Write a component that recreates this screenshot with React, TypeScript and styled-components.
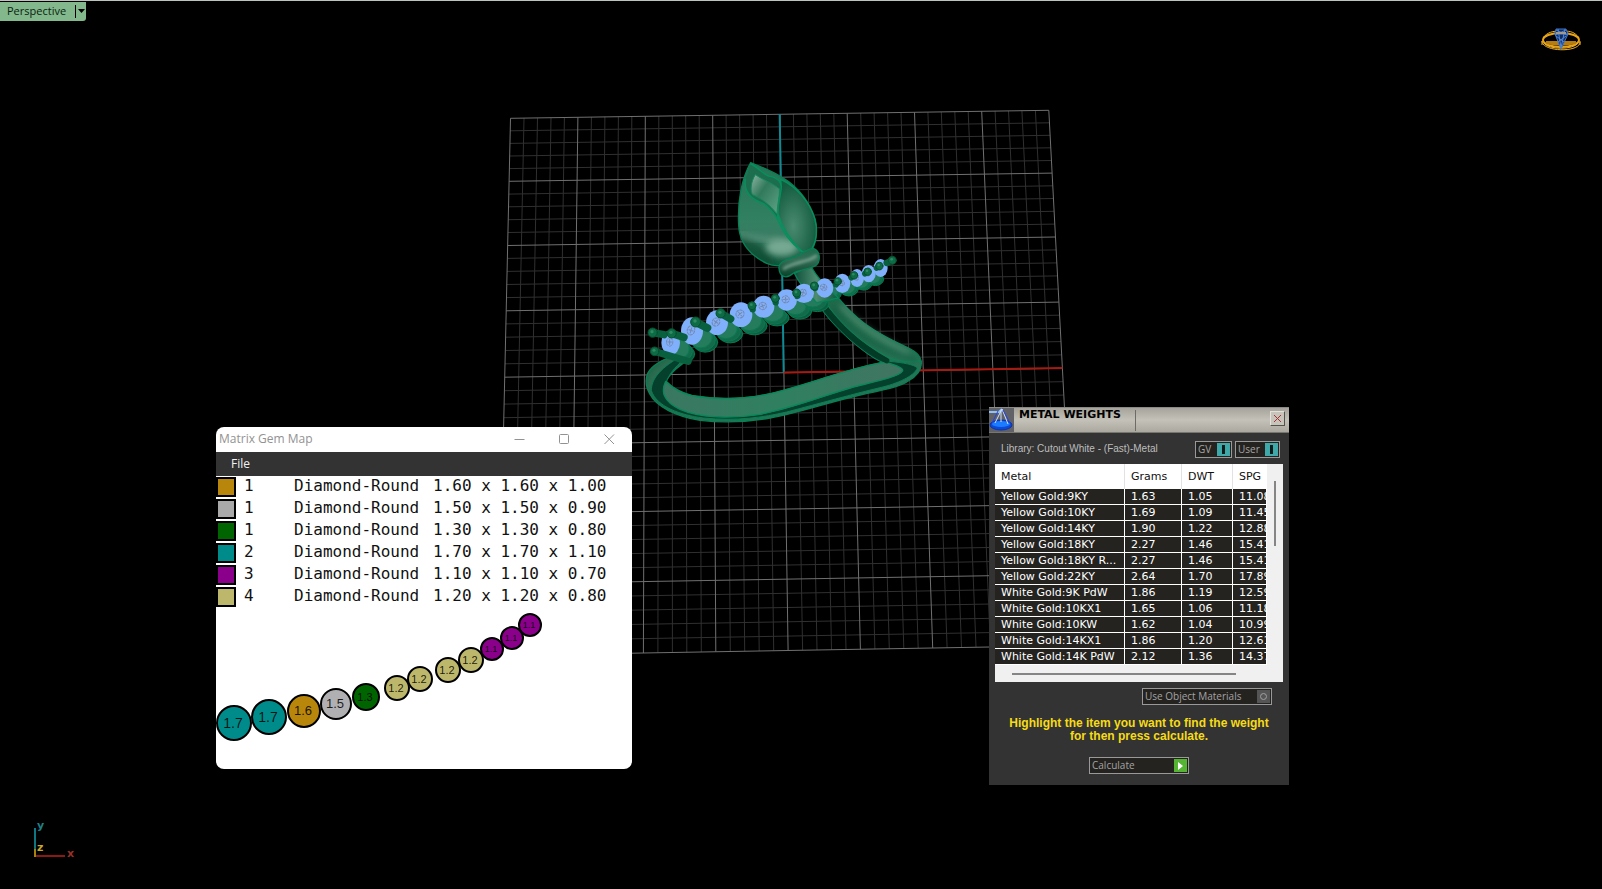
import React from "react";
import styled, { createGlobalStyle } from "styled-components";

const GlobalStyle = createGlobalStyle`
  *, *::before, *::after { box-sizing: border-box; }
  body { margin: 0; background: #000; }
  button { margin: 0; padding: 0; border: 0; background: none; font: inherit; color: inherit; }
  h1, h2, p { margin: 0; }
`;

const ui = `"Open Sans", "Noto Sans", sans-serif`;
const verdana = `"DejaVu Sans", Verdana, sans-serif`;
const sans = `"Liberation Sans", Arial, sans-serif`;

/* ---------- viewport ---------- */

const Viewport = styled.main`
  position: relative;
  min-height: 100vh;
  overflow: hidden;
  background: #000;
  border-top: 1px solid #bcc4be;
`;

const Scene = styled.svg`
  position: absolute;
  top: -1px;
  left: 0;
  width: 100%;
  height: 100vh;
  display: block;
`;

const ViewTab = styled.div`
  position: relative;
  display: inline-flex;
  height: 19px;
  background: #82b88c;
  border-bottom-right-radius: 3px;
  font: 11px/18px ${ui};
  color: #0b1d10;
`;

const ViewName = styled.button`
  width: 75px;
  padding-left: 7px;
  text-align: left;
`;

const ViewArrow = styled.button`
  display: flex;
  align-items: center;
  justify-content: center;
  width: 11px;
  margin: 3px 0;
  border-left: 1px solid #000;
`;

const RingLogo = styled.svg`
  position: absolute;
  top: 27px;
  right: 20px;
`;

const AxisTriad = styled.svg`
  position: absolute;
  left: 32px;
  bottom: 30px;
  font-family: "DejaVu Sans", sans-serif;
  font-size: 11px;
  font-weight: bold;
`;

type P = [number, number];

const corners: Record<"tl" | "tr" | "bl" | "br", P> = {
  tl: [510.5, 118.3],
  tr: [1048.8, 110.3],
  bl: [498.5, 655.5],
  br: [1077, 645.5],
};

/* Projects the unit square onto the construction plane's four corners. */
function project(u: number, v: number): P {
  const [x0, y0] = corners.tl;
  const [x1, y1] = corners.tr;
  const [x2, y2] = corners.br;
  const [x3, y3] = corners.bl;
  const dx1 = x1 - x2, dx2 = x3 - x2, dx3 = x0 - x1 + x2 - x3;
  const dy1 = y1 - y2, dy2 = y3 - y2, dy3 = y0 - y1 + y2 - y3;
  const det = dx1 * dy2 - dx2 * dy1;
  const g = (dx3 * dy2 - dx2 * dy3) / det;
  const h = (dx1 * dy3 - dx3 * dy1) / det;
  const w = g * u + h * v + 1;
  return [
    ((x1 - x0 + g * x1) * u + (x3 - x0 + h * x3) * v + x0) / w,
    ((y1 - y0 + g * y1) * u + (y3 - y0 + h * y3) * v + y0) / w,
  ];
}

const gridPath = (major: boolean) => {
  let d = "";
  for (let i = 0; i <= 40; i++) {
    if ((i % 5 === 0) !== major) continue;
    const t = i / 40;
    const ends: [P, P][] = [
      [project(t, 0), project(t, 1)],
      [project(0, t), project(1, t)],
    ];
    ends.forEach(([a, b]) => {
      d += `M${a[0].toFixed(1)} ${a[1].toFixed(1)}L${b[0].toFixed(1)} ${b[1].toFixed(1)}`;
    });
  }
  return d;
};

const stones = [
  [152, 608, 28, 37], [216, 573, 33, 41], [291, 548, 33, 37], [363, 524, 34, 37],
  [431, 500, 32, 33], [500, 480, 31, 32], [552, 460, 30, 29], [614, 444, 26, 29],
  [667, 430, 24, 29], [711, 414, 21, 27], [746, 401, 21, 26], [782, 384, 21, 27],
];

const prongs = [
  [98, 578, 132, 584, 14], [104, 634, 205, 664, 13], [155, 580, 192, 592, 14],
  [227, 546, 262, 564, 15], [302, 520, 332, 537, 14], [396, 497, 398, 508, 12],
  [466, 475, 467, 487, 12], [530, 459, 532, 468, 12], [583, 438, 585, 444, 12],
  [653, 424, 648, 434, 11], [702, 406, 694, 413, 11], [743, 395, 735, 401, 11],
  [778, 378, 770, 384, 11], [817, 361, 800, 369, 12],
];

const budOutline =
  "M392 68C365 115 352 185 356 255C358 305 388 345 440 370C455 376 468 378 480 376L570 336C590 315 593 270 586 240C572 190 535 140 486 112C455 92 415 77 392 68Z";

const Ring = () => (
  <g transform="translate(620 140) scale(.33333)" strokeLinecap="round" strokeLinejoin="round">
    <path
      d="M182 640C150 650 98 668 83 700C74 722 78 742 90 763C108 800 170 830 240 841C300 848 380 847 450 834C540 818 620 788 720 765C800 748 835 742 865 723C898 704 906 685 904 664C900 648 893 638 866 624C800 595 750 566 714 535C690 515 672 496 655 474L590 480C610 522 650 562 695 600C730 633 760 655 788 667C750 674 700 687 640 706C560 730 490 757 410 769C350 777 280 777 215 766C180 758 158 744 138 724C150 700 180 672 215 655Z"
      fill="url(#tube)" stroke="#087f55" strokeWidth="4"
    />
    <path d="M170 658C120 680 98 705 92 745" fill="none" stroke="#5d7f70" strokeWidth="10" opacity=".5" filter="url(#soft)" />
    <path
      d="M180 650C112 690 94 722 94 752C110 800 180 825 250 834C350 844 430 832 500 816C600 790 700 762 780 743C830 732 884 708 892 684C884 674 850 668 808 664C750 645 690 592 645 546C625 524 612 505 602 484L592 486C612 525 655 568 690 600C735 638 765 658 788 667C820 675 850 684 845 695C835 710 760 722 700 741C600 770 520 806 400 826C300 834 190 818 150 785C120 752 136 705 190 660Z"
      fill="#05402c" stroke="#077f55" strokeWidth="3"
    />
    <path
      d="M137 724C160 748 190 764 230 770C310 781 380 775 440 763C530 744 610 712 690 691C730 679 770 672 788 667C815 669 850 683 848 692C840 710 760 726 700 741C600 770 520 803 420 823C340 836 240 835 180 808C130 785 122 755 137 724Z"
      fill="url(#inner)" stroke="#08885a" strokeWidth="4"
    />
    <path d="M602 484C660 565 720 617 800 662" fill="none" stroke="#043b27" strokeWidth="16" />
    <path d="M612 480C660 552 720 605 800 650C835 664 870 669 900 662" fill="none" stroke="#08885a" strokeWidth="3" />
    <path d="M665 500C710 550 770 592 862 638" fill="none" stroke="#8fb3a2" strokeWidth="10" opacity=".55" filter="url(#soft)" />
    <path d="M640 505C700 580 770 625 890 660" fill="none" stroke="#0a4a33" strokeWidth="10" opacity=".6" filter="url(#soft)" />

    {stones.slice(0, 11).map(([x, y, rx, ry], i) => {
      const k = i < 7 ? 1 : 0.5;
      return (
        <g key={i} stroke="#08794f" strokeWidth="3">
          <ellipse cx={x + 40 * k} cy={y + 34 * k} rx={rx + 4} ry={ry * 0.72} fill="#0c5e42" />
          <ellipse cx={x + 34 * k} cy={y + 27 * k} rx={rx + 3} ry={ry * 0.76} fill="#156a4b" />
          <ellipse cx={x + 26 * k} cy={y + 18 * k} rx={rx + 2} ry={ry * 0.8} fill="#257c5d" />
        </g>
      );
    })}

    <path d="M523 400C540 435 560 458 590 488L655 474C625 448 590 410 572 378Z" fill="url(#stem)" stroke="#08835a" strokeWidth="4" />
    <path d={budOutline} fill="url(#bud)" />
    <g clipPath="url(#budClip)">
      <path d="M356 285C400 300 430 312 470 372L400 390L350 330Z" fill="#0a4c33" opacity=".75" filter="url(#soft)" />
      <ellipse cx="485" cy="322" rx="48" ry="26" fill="#8fbba6" opacity=".75" filter="url(#soft)" />
      <path d="M356 282C400 296 430 298 480 300" fill="none" stroke="#6da08a" strokeWidth="12" opacity=".7" filter="url(#soft)" />
    </g>
    <path d={budOutline} fill="none" stroke="#087f55" strokeWidth="4" />
    <path d="M482 118C488 155 470 190 474 222C488 265 510 300 545 334L570 334C592 305 593 265 584 235C568 185 530 140 482 118Z" fill="url(#petal)" stroke="#06905e" strokeWidth="4" />
    <path d="M376 118C372 150 384 175 430 190C452 205 464 222 474 240C468 205 482 175 484 140C482 122 470 114 455 110C435 112 415 80 392 72" fill="#1d6e4f" stroke="#06905e" strokeWidth="4" />
    <path d="M406 104C392 125 390 155 398 164C425 175 450 195 471 222C472 190 480 165 478 146C455 128 425 118 406 104Z" fill="url(#core)" stroke="#18885e" strokeWidth="3" />
    <path d="M474 240C488 275 512 308 545 334" fill="none" stroke="#079060" strokeWidth="5" />
    <path d="M477 385C474 372 490 360 515 354C545 346 560 325 580 325C602 332 603 365 587 377C565 390 535 388 520 400C500 418 478 412 477 385Z" fill="url(#collar)" stroke="#087f55" strokeWidth="4" />
    <path d="M492 386C520 366 562 368 588 348" fill="none" stroke="#9cc0b0" strokeWidth="8" opacity=".7" filter="url(#softSmall)" />

    {stones.map(([x, y, rx, ry], i) => (
      <g key={i}>
        <ellipse cx={x} cy={y} rx={rx} ry={ry} fill="#80b0fc" />
        <g fill="none" stroke="#7488ae" strokeWidth="3" transform={`translate(${x - 3} ${y - 2}) rotate(${i * 17})`}>
          <ellipse rx={rx * 0.34} ry={ry * 0.34} strokeDasharray="7 4" />
          <path d={`M-${rx * 0.2} 0H${rx * 0.2}M0 -${ry * 0.2}V${ry * 0.2}`} />
        </g>
      </g>
    ))}
    {prongs.map(([x1, y1, x2, y2, r], i) => (
      <g key={i}>
        <path d={`M${x1} ${y1}L${x2} ${y2}`} stroke="#09603e" strokeWidth={r * 1.6} />
        <circle cx={x1} cy={y1} r={r} fill="#0d6b45" stroke="#07502f" strokeWidth="3" />
        <circle cx={x1 - 2} cy={y1 - 3} r={r * 0.35} fill="#2f8a64" />
      </g>
    ))}
  </g>
);

const ViewportScene = () => (
  <Scene viewBox="0 0 1602 889" preserveAspectRatio="xMidYMid meet" aria-label="Ring model on the construction plane">
    <defs>
      <filter id="soft" x="-50%" y="-50%" width="200%" height="200%"><feGaussianBlur stdDeviation="9" /></filter>
      <filter id="softSmall" x="-50%" y="-50%" width="200%" height="200%"><feGaussianBlur stdDeviation="4" /></filter>
      <clipPath id="budClip"><path d={budOutline} /></clipPath>
      <linearGradient id="tube" x1="0" y1="0" x2="1" y2="1">
        <stop offset="0" stopColor="#1b5a41" /><stop offset=".5" stopColor="#24704f" /><stop offset="1" stopColor="#2b755a" />
      </linearGradient>
      <linearGradient id="inner">
        <stop offset="0" stopColor="#3b7762" /><stop offset=".5" stopColor="#2f8060" /><stop offset="1" stopColor="#427462" />
      </linearGradient>
      <linearGradient id="stem">
        <stop offset="0" stopColor="#10503a" /><stop offset=".5" stopColor="#4c8c70" /><stop offset="1" stopColor="#0d573c" />
      </linearGradient>
      <linearGradient id="bud" x1="0" y1="0" x2="0" y2="1">
        <stop offset="0" stopColor="#247355" /><stop offset=".55" stopColor="#328062" /><stop offset=".75" stopColor="#3a7c64" /><stop offset="1" stopColor="#0e573c" />
      </linearGradient>
      <radialGradient id="petal" cx=".4" cy=".65" r=".6">
        <stop offset="0" stopColor="#498a71" /><stop offset="1" stopColor="#145c40" />
      </radialGradient>
      <linearGradient id="core" x1="0" y1="0" x2="1" y2="1">
        <stop offset="0" stopColor="#8fb5a4" /><stop offset=".4" stopColor="#31795b" /><stop offset="1" stopColor="#60a486" />
      </linearGradient>
      <linearGradient id="collar" x1="0" y1="0" x2="0" y2="1">
        <stop offset="0" stopColor="#1c6b4b" /><stop offset=".4" stopColor="#346e57" /><stop offset="1" stopColor="#08422b" />
      </linearGradient>
    </defs>
    <path d={gridPath(false)} stroke="#303030" fill="none" />
    <path d={gridPath(true)} stroke="#707070" fill="none" />
    <path d="M779.7 114.3L783.7 372.5" stroke="#0e8a94" strokeWidth="2" />
    <path d="M783.7 372.5L1062.5 368" stroke="#a81a10" strokeWidth="2" />
    <Ring />
  </Scene>
);

/* ---------- gem map window ---------- */

const GemWindow = styled.section`
  position: absolute;
  left: 216px;
  top: 426px;
  width: 416px;
  background: #fff;
  border-radius: 8px;
  overflow: hidden;
`;

const TitleBar = styled.header`
  display: flex;
  justify-content: space-between;
  height: 25px;
  padding-left: 3px;
  color: #929292;
`;

const WindowTitle = styled.h1`
  font: 12px/24px ${ui};
`;

const WindowButtons = styled.div`
  display: flex;
`;

const WindowButton = styled.button`
  display: flex;
  align-items: center;
  justify-content: center;
  width: 45px;
`;

const MenuBar = styled.nav`
  display: flex;
  height: 24px;
  padding: 0 15px;
  background: #333;
  color: #f2f2f2;
  font: 12px/24px ${ui};
`;

const GemTable = styled.table`
  border-collapse: collapse;
  font: 16px/20px "DejaVu Sans Mono", "Liberation Mono", monospace;
  color: #111;

  td { padding: 0; white-space: pre; vertical-align: top; }
  tr { height: 22px; }
`;

const SwatchCell = styled.td`
  width: 28px;
`;

const CountCell = styled.td`
  width: 50px;
`;

const NameCell = styled.td`
  width: 139px;
`;

const Swatch = styled.span<{ $color: string }>`
  display: block;
  width: 20px;
  height: 20px;
  margin-top: 1px;
  border: 2px solid #000;
  background: ${(p) => p.$color};
`;

const GemLayout = styled.svg`
  display: block;
  width: 100%;
  font-family: ${sans};
`;

const colors = {
  gold: "#b8860b",
  silver: "#a9a9a9",
  green: "#006400",
  teal: "#008b8b",
  purple: "#8b008b",
  khaki: "#bdb76b",
};

const gems = [
  { color: colors.gold, count: 1, size: "1.60 x 1.60 x 1.00" },
  { color: colors.silver, count: 1, size: "1.50 x 1.50 x 0.90" },
  { color: colors.green, count: 1, size: "1.30 x 1.30 x 0.80" },
  { color: colors.teal, count: 2, size: "1.70 x 1.70 x 1.10" },
  { color: colors.purple, count: 3, size: "1.10 x 1.10 x 0.70" },
  { color: colors.khaki, count: 4, size: "1.20 x 1.20 x 0.80" },
];

const layout: [number, number, number, string, string, number][] = [
  [18, 115, 17, colors.teal, "1.7", 14],
  [53, 109, 17, colors.teal, "1.7", 14],
  [88, 103, 16, colors.gold, "1.6", 13],
  [120, 96, 15, "#b0b0b2", "1.5", 13],
  [150, 89, 13, colors.green, "1.3", 11],
  [181, 80, 12, colors.khaki, "1.2", 11],
  [204, 71, 12, colors.khaki, "1.2", 11],
  [232, 62, 12, colors.khaki, "1.2", 11],
  [255, 52, 12, colors.khaki, "1.2", 11],
  [276, 41, 11, colors.purple, "1.1", 9],
  [296, 30, 11, colors.purple, "1.1", 9],
  [314, 17, 11, colors.purple, "1.1", 9],
];

const GemMap = () => (
  <GemWindow aria-label="Matrix Gem Map">
    <TitleBar>
      <WindowTitle>Matrix Gem Map</WindowTitle>
      <WindowButtons>
        <WindowButton aria-label="Minimize">
          <svg width="11" height="11" stroke="currentColor"><path d="M.5 5.5h10" /></svg>
        </WindowButton>
        <WindowButton aria-label="Maximize">
          <svg width="11" height="11" stroke="currentColor" fill="none"><rect x=".5" y=".5" width="9" height="9" rx="1" /></svg>
        </WindowButton>
        <WindowButton aria-label="Close">
          <svg width="11" height="11" stroke="currentColor"><path d="M.5 .5L10 10M10 .5L.5 10" /></svg>
        </WindowButton>
      </WindowButtons>
    </TitleBar>
    <MenuBar><button>File</button></MenuBar>
    <GemTable>
      <tbody>
        {gems.map((g) => (
          <tr key={g.size}>
            <SwatchCell><Swatch $color={g.color} /></SwatchCell>
            <CountCell>{g.count}</CountCell>
            <NameCell>Diamond-Round</NameCell>
            <td>{g.size}</td>
          </tr>
        ))}
      </tbody>
    </GemTable>
    <GemLayout viewBox="0 0 416 161" aria-label="Gem positions">
      {layout.map(([x, y, r, color, label, size], i) => (
        <g key={i}>
          <circle cx={x} cy={y} r={r} fill={color} stroke="#000" strokeWidth="2" />
          <text x={x - 1} y={y + Math.round(size / 3)} fontSize={size} textAnchor="middle" fill="#000" fillOpacity=".85">{label}</text>
        </g>
      ))}
    </GemLayout>
  </GemWindow>
);

/* ---------- metal weights window ---------- */

const Panel = styled.section`
  position: absolute;
  left: 989px;
  top: 406px;
  width: 300px;
  padding-bottom: 11px;
  background: #333;
`;

const PanelHeader = styled.header`
  display: flex;
  height: 26px;
  background: linear-gradient(#a5a39b, #c3c1b8 50%, #aaa89f);
  border-top: 1px solid #8b8a84;
  border-bottom: 1px solid #77766f;
`;

const PanelTitle = styled.h2`
  width: 122px;
  height: 21px;
  margin-top: 2px;
  padding-left: 5px;
  border-right: 1px solid #6c6b66;
  font: bold 11px/9px ${verdana};
  color: #000;
`;

const PanelClose = styled.button`
  display: flex;
  align-items: center;
  justify-content: center;
  width: 15px;
  height: 15px;
  margin: 3px 4px 0 auto;
  background: #c6c4bb;
  border: 1px solid;
  border-color: #e4e2da #55534d #55534d #e4e2da;
`;

const LibraryRow = styled.div`
  display: flex;
  align-items: center;
  gap: 3px;
  height: 31px;
  padding: 1px 9px 0 12px;
  color: #bdbdbd;
`;

const LibraryName = styled.p`
  flex: 1;
  font: 10px/16px "Liberation Sans", Arial, sans-serif;
`;

const FieldButton = styled.button<{ $width: number }>`
  display: flex;
  align-items: center;
  justify-content: space-between;
  width: ${(p) => p.$width}px;
  height: 17px;
  padding: 0 1px 0 2px;
  border: 1px solid #999;
  background: #242320;
  color: #a4a4a4;
  font: 10px/15px ${ui};
`;

const Chip = styled.span<{ $color: string }>`
  display: flex;
  align-items: center;
  justify-content: center;
  width: 13px;
  height: 13px;
  background: ${(p) => p.$color};
`;

const ListBox = styled.div`
  display: grid;
  grid-template-columns: 1fr 16px;
  margin: 0 6px;
  background: #f0f0f0;
`;

const ListClip = styled.div`
  overflow: hidden;
  border-right: 1px solid #fff;
`;

const MetalTable = styled.table`
  width: 290px;
  table-layout: fixed;
  border-collapse: separate;
  border-spacing: 0;
  font: 11px/15px ${verdana};

  th, td {
    padding: 0 0 0 6px;
    text-align: left;
    font-weight: normal;
    overflow: hidden;
    white-space: nowrap;
    text-overflow: ellipsis;
  }
  th { height: 25px; background: #fff; color: #111; border-right: 1px solid #e2e2e2; }
  td { height: 16px; background: #242320; color: #fff; border-right: 1px solid #fff; border-bottom: 1px solid #fff; }
`;

const VTrack = styled.div`
  padding: 17px 0 0 7px;
`;

const VThumb = styled.div`
  width: 2px;
  height: 65px;
  background: #858585;
`;

const HTrack = styled.div`
  height: 17px;
  padding: 8px 31px 0 17px;
`;

const HThumb = styled.div`
  height: 2px;
  background: #858585;
`;

const MaterialsRow = styled.div`
  display: flex;
  justify-content: flex-end;
  padding: 6px 17px 0 0;
`;

const Hint = styled.p`
  padding: 12px 0 14px;
  font: bold 12px/13px ${sans};
  text-align: center;
  color: #f6dc14;
`;

const ActionRow = styled.div`
  display: flex;
  justify-content: center;
`;

const metals = [
  ["Yellow Gold:9KY", "1.63", "1.05", "11.08"],
  ["Yellow Gold:10KY", "1.69", "1.09", "11.45"],
  ["Yellow Gold:14KY", "1.90", "1.22", "12.88"],
  ["Yellow Gold:18KY", "2.27", "1.46", "15.41"],
  ["Yellow Gold:18KY R...", "2.27", "1.46", "15.41"],
  ["Yellow Gold:22KY", "2.64", "1.70", "17.89"],
  ["White Gold:9K PdW", "1.86", "1.19", "12.59"],
  ["White Gold:10KX1", "1.65", "1.06", "11.18"],
  ["White Gold:10KW", "1.62", "1.04", "10.99"],
  ["White Gold:14KX1", "1.86", "1.20", "12.61"],
  ["White Gold:14K PdW", "2.12", "1.36", "14.37"],
];

const OnMark = () => (
  <svg width="3" height="9"><rect width="3" height="9" fill="#101c1c" /></svg>
);

const MetalWeights = () => (
  <Panel aria-label="Metal weights">
    <PanelHeader>
      <svg width="25" height="24" viewBox="0 0 25 24" fill="none">
        <rect width="25" height="24" fill="#606267" />
        <ellipse cx="12" cy="17" rx="11" ry="5" fill="#0a48d8" stroke="#1430a0" />
        <ellipse cx="12" cy="16" rx="9" ry="3" fill="#1b7cff" />
        <path d="M0 4h10l3-3" stroke="#8ec2ff" strokeWidth="2" />
        <path d="M13 1L6 15M13 1l6 15M12 2v12" stroke="#cfe2ff" />
        <path d="M9 3L3 15M14 2l7 13" stroke="#2244e8" />
      </svg>
      <PanelTitle>METAL WEIGHTS</PanelTitle>
      <PanelClose aria-label="Close panel">
        <svg width="9" height="9" stroke="#a83232"><path d="M1 1l7 7M8 1L1 8" /></svg>
      </PanelClose>
    </PanelHeader>
    <LibraryRow>
      <LibraryName>Library: Cutout White - (Fast)-Metal</LibraryName>
      <FieldButton $width={37} aria-pressed="true">GV<Chip $color="#3fa9a9"><OnMark /></Chip></FieldButton>
      <FieldButton $width={45} aria-pressed="true">User<Chip $color="#3fa9a9"><OnMark /></Chip></FieldButton>
    </LibraryRow>
    <ListBox>
      <ListClip>
        <MetalTable>
          <colgroup>
            <col width="130" /><col width="57" /><col width="51" /><col width="52" />
          </colgroup>
          <thead>
            <tr><th>Metal</th><th>Grams</th><th>DWT</th><th>SPG</th></tr>
          </thead>
          <tbody>
            {metals.map((row) => (
              <tr key={row[0]}>{row.map((c, i) => <td key={i}>{c}</td>)}</tr>
            ))}
          </tbody>
        </MetalTable>
      </ListClip>
      <VTrack><VThumb /></VTrack>
      <HTrack><HThumb /></HTrack>
    </ListBox>
    <MaterialsRow>
      <FieldButton $width={130}>
        Use Object Materials
        <Chip $color="#555">
          <svg width="9" height="9" fill="none" stroke="#a0a0a0"><circle cx="4.5" cy="4.5" r="3" /></svg>
        </Chip>
      </FieldButton>
    </MaterialsRow>
    <Hint>Highlight the item you want to find the weight<br />for then press calculate.</Hint>
    <ActionRow>
      <FieldButton $width={100}>
        Calculate
        <Chip $color="#55b432"><svg width="5" height="8"><path d="M0 0l5 4-5 4z" fill="#fff" /></svg></Chip>
      </FieldButton>
    </ActionRow>
  </Panel>
);

export default function App() {
  return (
    <>
      <GlobalStyle />
      <Viewport>
        <ViewportScene />
        <ViewTab>
          <ViewName>Perspective</ViewName>
          <ViewArrow aria-label="Viewport menu">
            <svg width="7" height="4"><path d="M0 0h7L3.5 4z" fill="#000" /></svg>
          </ViewArrow>
        </ViewTab>
        <RingLogo width="42" height="26" viewBox="0 0 42 26" fill="none" aria-label="Matrix">
          <ellipse cx="21" cy="12" rx="18" ry="7" stroke="#e8a317" strokeWidth="2" />
          <path d="M2 13c0 11 38 12 38 1M4 15c4 7 30 7 34 0M3 10C7 4 14 3 19 3M39 10C35 4 30 3 24 3M2 13v4M40 13v4" stroke="#f0b024" />
          <path d="M6 13h30v3q-15 3-30 0z" fill="#b67c12" />
          <path d="M16 1h10l2 5-7 15-6-15z" fill="#142c5c" stroke="#3e78cf" />
          <path d="M15 6h13M18 1l3 19 4-19M16 8l8 6M26 8l-8 6M16 2l11 5M26 2L15 7" stroke="#4d88dd" />
          <path d="M16 5h10" stroke="#a09a90" strokeWidth="2" />
        </RingLogo>
        <AxisTriad width="50" height="44" viewBox="0 0 50 44" fill="none" aria-label="Axes">
          <path d="M3 13v21" stroke="#0e7882" strokeWidth="2" />
          <path d="M3 34v8" stroke="#a8820c" strokeWidth="2" />
          <path d="M4 41h29" stroke="#8c1a14" strokeWidth="2" />
          <text x="5" y="14" fill="#1f8088">y</text>
          <text x="5" y="36" fill="#c8aa30">z</text>
          <text x="35" y="42" fill="#983028">x</text>
        </AxisTriad>
        <GemMap />
        <MetalWeights />
      </Viewport>
    </>
  );
}
